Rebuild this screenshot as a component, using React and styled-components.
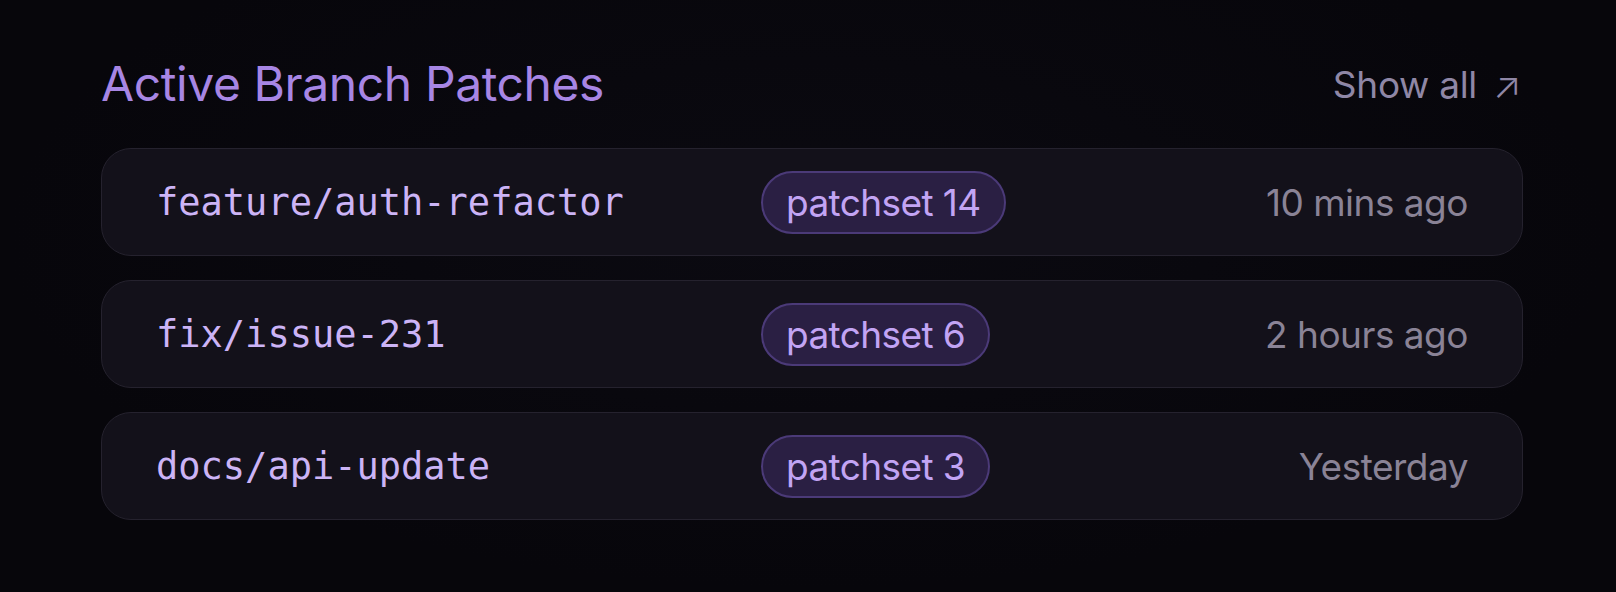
import React from "react";
import styled, { createGlobalStyle } from "styled-components";

const GlobalStyle = createGlobalStyle`
    html, body {
        margin: 0;
        padding: 0;
        background: #08070c;
    }
    body {
        font-family: Inter, "Noto Sans", sans-serif;
        -webkit-font-smoothing: antialiased;
    }
`

const Page = styled.main`
    min-height: 592px;
    box-sizing: border-box;
    padding: 55px 93px 40px 101px;
    background: radial-gradient(ellipse at 50% 40%, #0b0a11 0%, #07060b 70%);
`

const Header = styled.header`
    display: flex;
    align-items: center;
    justify-content: space-between;
    height: 58px;
    margin-bottom: 35px;
`

const Title = styled.h2`
    margin: 0;
    font-size: 48px;
    line-height: 58px;
    font-weight: 400;
    letter-spacing: -0.4px;
    color: #a786e4;
`

const ShowAll = styled.a`
    display: flex;
    align-items: center;
    gap: 16px;
    font-size: 37px;
    letter-spacing: -0.3px;
    color: #8f87a6;
    text-decoration: none;
    padding-right: 2px;
`

const Arrow = styled.span`
    font-size: 37px;
    font-weight: 300;
`

const List = styled.ul`
    list-style: none;
    margin: 0;
    padding: 0;
    display: flex;
    flex-direction: column;
    gap: 24px;
`

const Row = styled.li`
    display: grid;
    grid-template-columns: 605px auto 1fr;
    align-items: center;
    height: 108px;
    box-sizing: border-box;
    padding: 0 54px;
    background: #13111a;
    border: 1px solid #25222e;
    border-radius: 30px;
`

const Branch = styled.span`
    font-family: "DejaVu Sans Mono", "Liberation Mono", monospace;
    font-size: 37px;
    color: #ccb4f6;
`

const Pill = styled.span`
    display: inline-flex;
    align-items: center;
    height: 63px;
    box-sizing: border-box;
    padding: 0 23px;
    border: 2px solid #4b3a78;
    border-radius: 999px;
    background: #2a1f43;
    color: #c2a4f4;
    font-size: 37px;
    letter-spacing: -0.6px;
`

const Time = styled.span`
    justify-self: end;
    font-size: 37px;
    letter-spacing: -0.5px;
    color: #8a8396;
`

const patches = [
    { branch: "feature/auth-refactor", patchset: 14, time: "10 mins ago" },
    { branch: "fix/issue-231", patchset: 6, time: "2 hours ago" },
    { branch: "docs/api-update", patchset: 3, time: "Yesterday" },
]

const App = () => {
    return (
        <Page>
            <GlobalStyle />
            <Header>
                <Title>Active Branch Patches</Title>
                <ShowAll href="#">Show all <Arrow>↗</Arrow></ShowAll>
            </Header>
            <List>
                {patches.map((p) => (
                    <Row key={p.branch}>
                        <Branch>{p.branch}</Branch>
                        <div><Pill>patchset {p.patchset}</Pill></div>
                        <Time>{p.time}</Time>
                    </Row>
                ))}
            </List>
        </Page>
    )
}

export default App
